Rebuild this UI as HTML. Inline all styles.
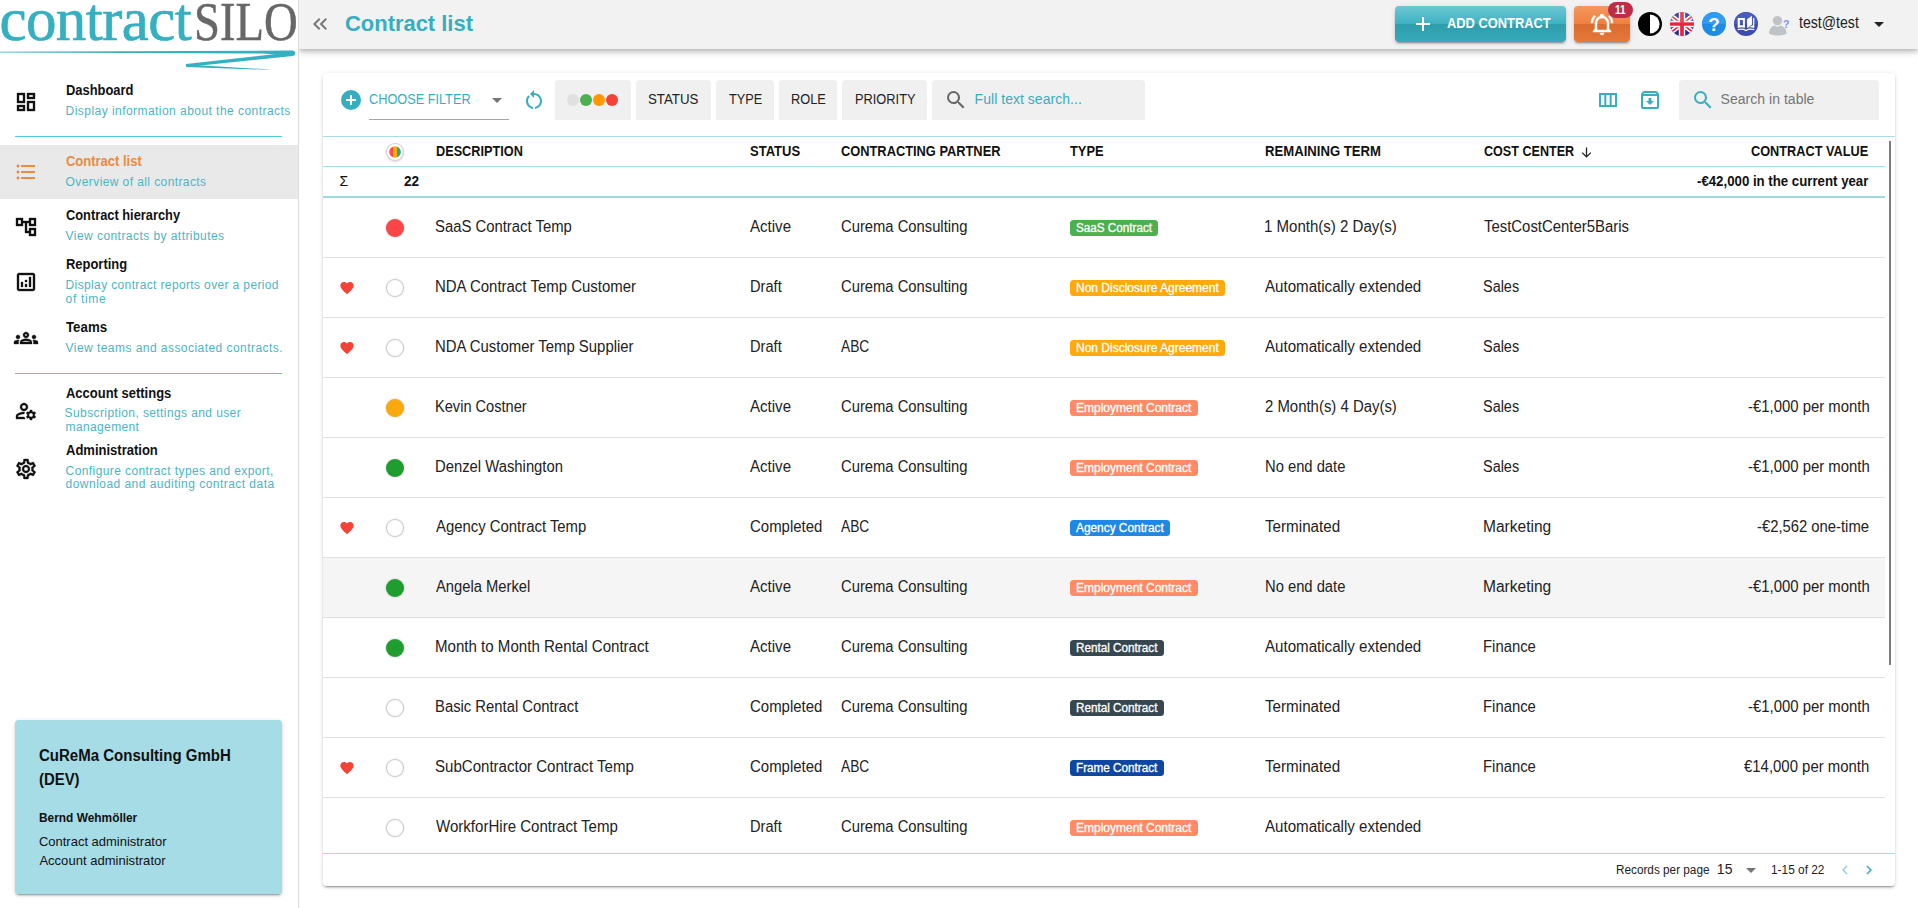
<!DOCTYPE html>
<html lang="en"><head><meta charset="utf-8"><title>Contract list</title>
<style>
html,body{margin:0;padding:0}
body{width:1918px;height:908px;overflow:hidden;position:relative;background:#fff;font-family:"Liberation Sans",sans-serif;color:#222}
.a{position:absolute;display:block}
.t{position:absolute;white-space:nowrap;display:block}
svg{overflow:visible}
</style></head><body>
<!-- ================= main background / card ================= -->
<div class="a" style="left:323px;top:73px;width:1572px;height:813px;background:#fff;border-radius:4px;box-shadow:0 3px 1px -2px rgba(0,0,0,.2),0 2px 2px 0 rgba(0,0,0,.14),0 1px 5px 0 rgba(0,0,0,.12)"></div>
<!-- ================= top bar ================= -->
<div class="a" style="left:299px;top:0;width:1619px;height:49px;background:#f2f2f2;box-shadow:0 2px 4px -1px rgba(0,0,0,.15),0 4px 5px 0 rgba(0,0,0,.12),0 1px 10px 0 rgba(0,0,0,.11)"></div>
<!-- ================= sidebar ================= -->
<div class="a" style="left:0;top:0;width:298px;height:908px;background:#fff;border-right:1px solid #dcdcdc"></div>
<!-- logo -->
<span class="t" style="left:-0.5px;top:-15px;font-family:'Liberation Serif',serif;font-size:61px;line-height:70px;color:#34b0c1;letter-spacing:-0.6px;-webkit-text-stroke:0.7px #34b0c1">contract</span>
<span class="t" style="left:194.3px;top:-11px;font-family:'Liberation Serif',serif;font-size:55px;line-height:66px;color:#676767;transform-origin:0 0;transform:scaleX(.849);-webkit-text-stroke:0.5px #676767">SILO</span>
<svg class="a" style="left:0;top:0" width="298" height="75" viewBox="0 0 298 75">
<path fill="#34b0c1" d="M0,51.700 L292,50.500 C296.500,50.500 296.500,56 292,56 L278,54.600 L262,53.500 L0,52.600 Z"/>
<path fill="#34b0c1" d="M293,55.900 L186,66.900 L186,64 L282,53.300 Z"/>
<path fill="#34b0c1" d="M186,64.6 L272.5,69.6 L262,69.6 L186,66.9 Z"/>
</svg>
<!-- active item bg -->
<div class="a" style="left:0;top:145px;width:298px;height:54px;background:#e9e9e9"></div>
<!-- dividers -->
<div class="a" style="left:15px;top:136px;width:267px;height:1px;background:#4fcbe0"></div>
<div class="a" style="left:15px;top:373px;width:267px;height:1px;background:#4fcbe0"></div>
<!-- sidebar icons -->
<svg class="a" style="left:14px;top:89.5px" width="24" height="24" viewBox="0 0 24 24"><path fill="#111" stroke="#111" stroke-width=".35" d="M19 5v2h-4V5h4M9 5v6H5V5h4m10 8v6h-4v-6h4M9 17v2H5v-2h4M21 3h-8v6h8V3zM11 3H3v10h8V3zm10 8h-8v10h8V11zm-10 4H3v6h8v-6z"/></svg>
<svg class="a" style="left:14px;top:160px" width="24" height="24" viewBox="0 0 24 24"><path fill="#ea8b3f" d="M4 10.5c-.83 0-1.500.67-1.500 1.500s.67 1.500 1.500 1.500 1.500-.67 1.500-1.500-.67-1.500-1.500-1.500zm0-6c-.83 0-1.500.67-1.500 1.500S3.170 7.500 4 7.500 5.500 6.830 5.500 6 4.830 4.500 4 4.500zm0 12c-.83 0-1.500.68-1.500 1.500s.68 1.500 1.500 1.500 1.500-.68 1.500-1.500-.67-1.500-1.500-1.500zM7 19h14v-2H7v2zm0-6h14v-2H7v2zm0-8v2h14V5H7z"/></svg>
<svg class="a" style="left:14px;top:214.5px" width="24" height="24" viewBox="0 0 24 24"><path fill="#111" stroke="#111" stroke-width=".35" d="M22,11V3h-7v3H9V3H2v8h7V8h2v10h4v3h7v-8h-7v3h-2V8h2v3H22z M7,9H4V5h3V9z M17,15h3v4h-3V15z M17,5h3v4h-3V5z"/></svg>
<svg class="a" style="left:14px;top:270px" width="24" height="24" viewBox="0 0 24 24"><path fill="#111" stroke="#111" stroke-width=".35" d="M19,3H5C3.900,3,3,3.900,3,5v14c0,1.100,0.900,2,2,2h14c1.100,0,2-0.900,2-2V5C21,3.900,20.100,3,19,3z M19,19H5V5h14V19z M7,12h2v5H7V12z M15,7h2v10h-2V7z M11,14h2v3h-2V14z M11,10h2v2h-2V10z"/></svg>
<svg class="a" style="left:14px;top:326px" width="24" height="24" viewBox="0 0 24 24"><path fill="#111" stroke="#111" stroke-width=".35" d="M4,13c1.100,0,2-0.900,2-2c0-1.100-0.900-2-2-2s-2,0.900-2,2C2,12.100,2.900,13,4,13z M5.130,14.100C4.760,14.040,4.390,14,4,14 c-0.990,0-1.930,0.210-2.780,0.580C0.480,14.900,0,15.620,0,16.430V18l4.500,0v-1.610C4.500,15.560,4.730,14.780,5.130,14.100z M20,13c1.100,0,2-0.900,2-2 c0-1.100-0.900-2-2-2s-2,0.900-2,2C18,12.100,18.900,13,20,13z M24,16.430c0-0.810-0.480-1.530-1.220-1.850C21.930,14.210,20.990,14,20,14 c-0.390,0-0.760,0.040-1.130,0.100c0.400,0.680,0.630,1.460,0.630,2.290V18l4.500,0V16.430z M16.240,13.650c-1.170-0.520-2.610-0.900-4.240-0.900 c-1.630,0-3.070,0.390-4.240,0.900C6.680,14.130,6,15.210,6,16.390V18h12v-1.610C18,15.210,17.320,14.130,16.240,13.650z M8.070,16 c0.090-0.230,0.130-0.390,0.910-0.690c0.970-0.380,1.990-0.560,3.020-0.560s2.050,0.180,3.020,0.560c0.770,0.300,0.810,0.460,0.910,0.690H8.070z M12,8 c0.550,0,1,0.450,1,1s-0.450,1-1,1s-1-0.450-1-1S11.450,8,12,8 M12,6c-1.660,0-3,1.340-3,3c0,1.660,1.340,3,3,3s3-1.340,3-3 C15,7.340,13.660,6,12,6L12,6z"/></svg>
<svg class="a" style="left:14px;top:398.5px" width="24" height="24" viewBox="0 0 24 24"><path fill="#111" stroke="#111" stroke-width=".35" d="M4 18v-.65c0-.34.16-.66.41-.81C6.100 15.530 8.030 15 10 15c.03 0 .05 0 .08.010.1-.7.300-1.370.59-1.980-.22-.02-.44-.03-.67-.03-2.420 0-4.680.67-6.610 1.820-.88.520-1.390 1.500-1.390 2.530V20h9.260c-.42-.6-.75-1.280-.97-2H4zM10 12c2.210 0 4-1.790 4-4s-1.790-4-4-4-4 1.790-4 4 1.790 4 4 4zm0-6c1.100 0 2 .9 2 2s-.9 2-2 2-2-.9-2-2 .9-2 2-2zM20.750 16c0-.22-.03-.42-.06-.63l1.140-1.010-1-1.730-1.450.49c-.32-.27-.68-.48-1.080-.63L18 11h-2l-.3 1.490c-.4.150-.76.360-1.080.63l-1.450-.49-1 1.730 1.140 1.010c-.03.210-.06.410-.06.630s.03.420.06.630l-1.140 1.010 1 1.730 1.450-.49c.32.270.68.480 1.080.63L16 21h2l.3-1.490c.4-.15.760-.36 1.080-.63l1.450.49 1-1.730-1.140-1.010c.03-.21.060-.41.060-.63zM17 18c-1.100 0-2-.9-2-2s.9-2 2-2 2 .9 2 2-.9 2-2 2z"/></svg>
<svg class="a" style="left:14px;top:456.500px" width="24" height="24" viewBox="0 0 24 24"><path fill="#111" stroke="#111" stroke-width=".35" d="M19.430 12.980c.04-.32.070-.64.070-.98 0-.34-.03-.66-.07-.98l2.110-1.650c.19-.15.240-.42.120-.64l-2-3.460c-.09-.16-.26-.25-.44-.25-.06 0-.12.010-.17.030l-2.490 1c-.52-.4-1.080-.73-1.690-.98l-.38-2.650C14.460 2.180 14.250 2 14 2h-4c-.25 0-.46.180-.49.420l-.38 2.650c-.61.250-1.170.59-1.690.98l-2.490-1c-.06-.02-.12-.03-.18-.03-.17 0-.34.090-.43.250l-2 3.460c-.13.220-.07.490.12.640l2.110 1.650c-.04.320-.07.650-.07.980 0 .33.030.66.070.98l-2.110 1.650c-.19.150-.24.420-.12.640l2 3.460c.09.160.26.250.44.250.06 0 .12-.01.170-.03l2.490-1c.52.400 1.080.73 1.690.98l.38 2.650c.03.240.24.420.49.420h4c.25 0 .46-.18.490-.42l.38-2.650c.61-.25 1.170-.59 1.690-.98l2.490 1c.06.020.12.030.18.030.17 0 .34-.09.430-.25l2-3.460c.12-.22.070-.49-.12-.64l-2.110-1.650zm-1.980-1.710c.04.310.05.520.05.730 0 .21-.02.430-.05.730l-.14 1.130.89.700 1.080.84-.7 1.210-1.270-.51-1.040-.42-.9.680c-.43.320-.84.560-1.250.73l-1.060.43-.16 1.130-.2 1.350h-1.400l-.19-1.350-.16-1.130-1.060-.43c-.43-.18-.83-.41-1.230-.71l-.91-.7-1.060.43-1.270.51-.7-1.210 1.080-.84.890-.7-.14-1.130c-.03-.31-.05-.54-.05-.74s.02-.43.050-.73l.14-1.130-.89-.7-1.080-.84.700-1.210 1.270.51 1.040.42.900-.68c.43-.32.840-.56 1.250-.73l1.060-.43.160-1.130.2-1.350h1.390l.19 1.350.16 1.130 1.060.43c.43.180.83.410 1.230.71l.91.700 1.060-.43 1.270-.51.700 1.210-1.070.85-.89.700.14 1.130zM12 8c-2.210 0-4 1.790-4 4s1.790 4 4 4 4-1.790 4-4-1.790-4-4-4zm0 6c-1.100 0-2-.9-2-2s.9-2 2-2 2 .9 2 2-.9 2-2 2z"/></svg>
<!-- info card -->
<div class="a" style="left:15px;top:720px;width:267px;height:174px;background:#a5dce6;border-radius:4px;box-shadow:0 3px 1px -2px rgba(0,0,0,.2),0 2px 2px 0 rgba(0,0,0,.14),0 1px 5px 0 rgba(0,0,0,.12)"></div>
<!-- ================= top bar content ================= -->
<svg class="a" style="left:308px;top:12px" width="24" height="24" viewBox="0 0 24 24"><path fill="#777" d="M17.590 18L19 16.590 14.420 12 19 7.410 17.590 6l-6 6z M11 18l1.410-1.410L7.830 12l4.580-4.590L11 6l-6 6z"/></svg>
<!-- add contract button -->
<div class="a" style="left:1395px;top:6px;width:171px;height:36px;border-radius:4px;background:linear-gradient(#6dc7d3 0%,#3db2c2 50%,#2e9dac 50%,#36abba 100%);box-shadow:0 3px 1px -2px rgba(0,0,0,.2),0 2px 2px 0 rgba(0,0,0,.14),0 1px 5px 0 rgba(0,0,0,.12)"></div>
<svg class="a" style="left:1411px;top:12px" width="24" height="24" viewBox="0 0 24 24"><path fill="#fff" d="M19,13H13V19H11V13H5V11H11V5H13V11H19V13Z"/></svg>
<!-- bell button -->
<div class="a" style="left:1574px;top:6px;width:56px;height:36px;border-radius:4px;background:linear-gradient(#f6975f 0%,#f0803f 50%,#d86b2d 50%,#e6783a 100%);box-shadow:0 3px 1px -2px rgba(0,0,0,.2),0 2px 2px 0 rgba(0,0,0,.14),0 1px 5px 0 rgba(0,0,0,.12)"></div>
<svg class="a" style="left:1590px;top:12px" width="24" height="24" viewBox="0 0 24 24"><path fill="#fff" stroke="#fff" stroke-width=".5" d="M10,21H14A2,2 0 0,1 12,23A2,2 0 0,1 10,21M21,19V20H3V19L5,17V11C5,7.900 7.030,5.170 10,4.290C10,4.190 10,4.100 10,4A2,2 0 0,1 12,2A2,2 0 0,1 14,4C14,4.100 14,4.190 14,4.290C16.970,5.170 19,7.900 19,11V17L21,19M17,11A5,5 0 0,0 12,6A5,5 0 0,0 7,11V18H17V11M19.750,3.190L18.330,4.610C20.040,6.300 21,8.600 21,11H23C23,8.070 21.840,5.250 19.750,3.190M1,11H3C3,8.600 3.960,6.300 5.670,4.610L4.250,3.190C2.160,5.250 1,8.070 1,11Z"/></svg>
<div class="a" style="left:1608px;top:2px;width:25px;height:16px;border-radius:8px;background:#b92f47"></div>
<!-- contrast icon -->
<svg class="a" style="left:1638px;top:12px" width="24" height="24" viewBox="0 0 24 24"><circle cx="12" cy="12" r="12" fill="#000"/><path fill="#fff" d="M12,2.400 A9.600,9.600 0 0 1 12,21.600 Z"/></svg>
<!-- UK flag -->
<svg class="a" style="left:1670px;top:12px" width="24" height="24" viewBox="0 0 24 24"><defs><clipPath id="fc"><circle cx="12" cy="12" r="12"/></clipPath></defs><g clip-path="url(#fc)"><rect width="24" height="24" fill="#1f2d8a"/><path d="M-4,0 L28,24 M28,0 L-4,24" stroke="#fff" stroke-width="4.600"/><path d="M-4,0 L28,24 M28,0 L-4,24" stroke="#e8243c" stroke-width="1.500"/><path d="M12,0V24M0,12H24" stroke="#fff" stroke-width="6.400"/><path d="M12,0V24M0,12H24" stroke="#e8243c" stroke-width="3.700"/><rect width="24" height="11" fill="#fff" opacity=".14"/></g></svg>
<!-- help -->
<svg class="a" style="left:1702px;top:12px" width="24" height="24" viewBox="0 0 24 24"><defs><clipPath id="hc"><circle cx="12" cy="12" r="12"/></clipPath></defs><g clip-path="url(#hc)"><rect width="24" height="24" fill="#1e8be4"/><rect width="24" height="12" fill="#2f9bf3"/></g><text x="12" y="18.900" text-anchor="middle" font-family="Liberation Sans" font-weight="700" font-size="19" fill="#fff">?</text></svg>
<!-- book -->
<svg class="a" style="left:1734px;top:12px" width="24" height="24" viewBox="0 0 24 24"><defs><clipPath id="bc"><circle cx="12" cy="12" r="12"/></clipPath></defs><g clip-path="url(#bc)"><rect width="24" height="24" fill="#3b4cb0"/><rect width="24" height="12" fill="#4a5bbd"/></g><path fill="#fff" transform="translate(12 11.300) scale(1.120) translate(-12 -11.300)" d="M4.600,6.600 H11 V15.400 C9.400,14.700 7,14.700 4.600,15.500 Z M6.500,8.400 V13.300 C7.500,13.100 8.500,13.100 9.300,13.300 V8.400 Z M13,7.600 L17.300,4.600 V12.600 L13,15.400 Z M18.300,6.600 H19.400 V15.500 C17,14.700 14.600,14.700 13,15.400 L18.300,13.100 Z M4.600,16.400 C7,15.600 9.800,15.700 12,17 C14.200,15.700 17,15.600 19.400,16.400 V17.600 C17,16.900 14.300,17 12,18.300 C9.700,17 7,16.900 4.600,17.600 Z"/></svg>
<!-- user -->
<svg class="a" style="left:1767px;top:12px" width="24" height="24" viewBox="0 0 24 24"><circle cx="10.500" cy="8.600" r="4.700" fill="#bfc3c5"/><path fill="#bfc3c5" d="M2,21.500 C2,16.500 5.500,14 7.800,13.600 C9.300,15.100 11.700,15.100 13.200,13.600 C15.600,14 19.600,16.500 19.600,21.500 C15,24.300 6.500,24.300 2,21.500 Z"/><text x="16" y="16" font-family="Liberation Sans" font-weight="700" font-size="10.500" fill="#7d90f2">?</text></svg>
<svg class="a" style="left:1874px;top:21.700px" width="10" height="5" viewBox="0 0 10 5"><path fill="#222" d="M0,0H10L5,5Z"/></svg>
<!-- ================= toolbar ================= -->
<svg class="a" style="left:339.400px;top:88px" width="24" height="24" viewBox="0 0 24 24"><circle cx="12" cy="12" r="10" fill="#35afc0"/><path fill="#fff" d="M17,13H13V17H11V13H7V11H11V7H13V11H17V13Z"/></svg>
<div class="a" style="left:369px;top:119px;width:140px;height:1px;background:#a6a6a6"></div>
<svg class="a" style="left:492.300px;top:97.900px" width="10" height="5" viewBox="0 0 10 5"><path fill="#757575" d="M0,0H10L5,5Z"/></svg>
<svg class="a" style="left:522px;top:87.800px" width="24" height="24" viewBox="0 0 24 24"><path fill="#35afc0" d="M12,5V2L8,6l4,4V7c3.310,0,6,2.690,6,6c0,2.970-2.170,5.430-5,5.910v2.020c3.950-0.490,7-3.850,7-7.930C20,8.580,16.420,5,12,5z M6,13c0-1.650,0.670-3.150,1.760-4.240L6.340,7.340C4.900,8.790,4,10.790,4,13c0,4.080,3.050,7.440,7,7.930v-2.020 C8.170,18.430,6,15.970,6,13z"/></svg>
<div class="a" style="left:555px;top:80px;width:76px;height:40px;border-radius:4px 4px 0 0;background:#f0f0f0"></div>
<div class="a" style="left:567px;top:94px;width:12px;height:12px;border-radius:50%;background:#e0e0e0"></div>
<div class="a" style="left:580px;top:94px;width:12px;height:12px;border-radius:50%;background:#4caf50"></div>
<div class="a" style="left:593px;top:94px;width:12px;height:12px;border-radius:50%;background:#ff9800"></div>
<div class="a" style="left:606px;top:94px;width:12px;height:12px;border-radius:50%;background:#f44336"></div>
<div class="a" style="left:636px;top:80px;width:75px;height:40px;border-radius:4px 4px 0 0;background:#f0f0f0"></div>
<div class="a" style="left:716px;top:80px;width:58px;height:40px;border-radius:4px 4px 0 0;background:#f0f0f0"></div>
<div class="a" style="left:779px;top:80px;width:58px;height:40px;border-radius:4px 4px 0 0;background:#f0f0f0"></div>
<div class="a" style="left:842px;top:80px;width:85px;height:40px;border-radius:4px 4px 0 0;background:#f0f0f0"></div>
<div class="a" style="left:932px;top:80px;width:213px;height:40px;border-radius:4px 4px 0 0;background:#f0f0f0"></div>
<svg class="a" style="left:944.300px;top:88px" width="24" height="24" viewBox="0 0 24 24"><path fill="#666" d="M9.500,3A6.500,6.500 0 0,1 16,9.500C16,11.110 15.410,12.590 14.440,13.730L14.710,14H15.500L20.500,19L19,20.500L14,15.500V14.710L13.730,14.440C12.590,15.410 11.110,16 9.500,16A6.500,6.500 0 0,1 3,9.500A6.500,6.500 0 0,1 9.500,3M9.500,5C7,5 5,7 5,9.500C5,12 7,14 9.500,14C12,14 14,12 14,9.500C14,7 12,5 9.500,5Z"/></svg>
<svg class="a" style="left:1596.200px;top:88px" width="24" height="24" viewBox="0 0 24 24"><path fill="#35afc0" d="M3 5v14h18V5H3zm5.330 12H5V7h3.330v10zm5.340 0h-3.330V7h3.330v10zM19 17h-3.330V7H19v10z"/></svg>
<svg class="a" style="left:1638.200px;top:88.200px" width="24" height="24" viewBox="0 0 24 24"><path fill="#35afc0" d="M20.540 5.230l-1.390-1.680C18.880 3.210 18.470 3 18 3H6c-.47 0-.88.210-1.160.55L3.460 5.230C3.170 5.570 3 6.020 3 6.500V19c0 1.100.9 2 2 2h14c1.100 0 2-.9 2-2V6.500c0-.48-.17-.93-.46-1.270zM6.240 5h11.520l.81.970H5.440l.8-.97zM5 19V8h14v11H5zm8.450-9h-2.900v3H8l4 4 4-4h-2.550z"/></svg>
<div class="a" style="left:1679px;top:80px;width:200px;height:40px;border-radius:4px 4px 0 0;background:#f0f0f0"></div>
<svg class="a" style="left:1691px;top:88px" width="24" height="24" viewBox="0 0 24 24"><path fill="#35afc0" d="M9.500,3A6.500,6.500 0 0,1 16,9.500C16,11.110 15.410,12.590 14.440,13.730L14.710,14H15.500L20.500,19L19,20.500L14,15.500V14.710L13.730,14.440C12.590,15.410 11.110,16 9.500,16A6.500,6.500 0 0,1 3,9.500A6.500,6.500 0 0,1 9.500,3M9.500,5C7,5 5,7 5,9.500C5,12 7,14 9.500,14C12,14 14,12 14,9.500C14,7 12,5 9.500,5Z"/></svg>
<!-- ================= table lines ================= -->
<div class="a" style="left:323px;top:136px;width:1572px;height:1px;background:#a9dde5"></div>
<div class="a" style="left:323px;top:166px;width:1562px;height:1px;background:#a9dde5"></div>
<div class="a" style="left:323px;top:196px;width:1562px;height:2px;background:#9fd9e1"></div>
<div class="a" style="left:323px;top:853px;width:1572px;height:1px;background:#a9dde5"></div>
<div class="a" style="left:1889px;top:141px;width:2.400px;height:524px;background:#7d7d7d"></div>
<!-- header traffic icon -->
<div class="a" style="left:386px;top:143px;width:18px;height:18px;border-radius:50%;background:#fff;box-shadow:inset 0 0 0 1px #cdcdcd,0 1px 2px rgba(0,0,0,.15)"></div>
<svg class="a" style="left:389px;top:146px" width="12" height="12" viewBox="0 0 12 12"><defs><clipPath id="tc"><circle cx="6" cy="6" r="5.800"/></clipPath></defs><g clip-path="url(#tc)"><rect x="0" width="4" height="12" fill="#ff4d4d"/><rect x="4" width="4" height="12" fill="#ffab00"/><rect x="8" width="4" height="12" fill="#26a98a"/></g></svg>
<!-- sort arrow -->
<svg class="a" style="left:1580.500px;top:146.500px" width="11" height="11" viewBox="0 0 11 11"><path fill="none" stroke="#222" stroke-width="1.300" d="M5.500,0.500V9.700M1.200,5.600L5.500,9.900L9.800,5.600"/></svg>
<!-- footer icons -->
<svg class="a" style="left:1746px;top:867.900px" width="10" height="5" viewBox="0 0 10 5"><path fill="#757575" d="M0,0H10L5,5Z"/></svg>
<svg class="a" style="left:1836.400px;top:860.700px" width="18" height="18" viewBox="0 0 24 24"><path fill="#8fd0da" d="M15.410,16.580L10.830,12L15.410,7.410L14,6L8,12L14,18L15.410,16.580Z"/></svg>
<svg class="a" style="left:1860px;top:860.700px" width="18" height="18" viewBox="0 0 24 24"><path fill="#35afc0" d="M8.590,16.580L13.170,12L8.590,7.410L10,6L16,12L10,18L8.590,16.580Z"/></svg>
<div class="a" style="left:386px;top:219.0px;width:18px;height:18px;border-radius:50%;background:#fa4549;box-shadow:0 0 2px rgba(0,0,0,.3)"></div>
<div class="a" style="left:1070px;top:220.0px;width:88px;height:16px;border-radius:3.5px;background:#4caf50"></div>
<div class="a" style="left:323px;top:257px;width:1562px;height:1px;background:#e0e0e0"></div>
<svg class="a" style="left:339px;top:280.3px" width="16" height="16" viewBox="0 0 24 24"><path fill="#f44336" d="M12,21.35L10.55,20.03C5.4,15.36 2,12.27 2,8.5C2,5.41 4.42,3 7.5,3C9.24,3 10.91,3.81 12,5.08C13.09,3.81 14.76,3 16.5,3C19.58,3 22,5.41 22,8.5C22,12.27 18.6,15.36 13.45,20.03L12,21.35Z"/></svg>
<div class="a" style="left:386px;top:279.0px;width:18px;height:18px;border-radius:50%;background:#fff;box-shadow:inset 0 0 0 1px #c6c6c6,0 0 2px rgba(0,0,0,.18)"></div>
<div class="a" style="left:1070px;top:280.0px;width:155px;height:16px;border-radius:3.5px;background:#ffa90a"></div>
<div class="a" style="left:323px;top:317px;width:1562px;height:1px;background:#e0e0e0"></div>
<svg class="a" style="left:339px;top:340.3px" width="16" height="16" viewBox="0 0 24 24"><path fill="#f44336" d="M12,21.35L10.55,20.03C5.4,15.36 2,12.27 2,8.5C2,5.41 4.42,3 7.5,3C9.24,3 10.91,3.81 12,5.08C13.09,3.81 14.76,3 16.5,3C19.58,3 22,5.41 22,8.5C22,12.27 18.6,15.36 13.45,20.03L12,21.35Z"/></svg>
<div class="a" style="left:386px;top:339.0px;width:18px;height:18px;border-radius:50%;background:#fff;box-shadow:inset 0 0 0 1px #c6c6c6,0 0 2px rgba(0,0,0,.18)"></div>
<div class="a" style="left:1070px;top:340.0px;width:155px;height:16px;border-radius:3.5px;background:#ffa90a"></div>
<div class="a" style="left:323px;top:377px;width:1562px;height:1px;background:#e0e0e0"></div>
<div class="a" style="left:386px;top:399.0px;width:18px;height:18px;border-radius:50%;background:#f9a90c;box-shadow:0 0 2px rgba(0,0,0,.3)"></div>
<div class="a" style="left:1070px;top:400.0px;width:128px;height:16px;border-radius:3.5px;background:#ff8a65"></div>
<div class="a" style="left:323px;top:437px;width:1562px;height:1px;background:#e0e0e0"></div>
<div class="a" style="left:386px;top:459.0px;width:18px;height:18px;border-radius:50%;background:#1f9d2e;box-shadow:0 0 2px rgba(0,0,0,.3)"></div>
<div class="a" style="left:1070px;top:460.0px;width:128px;height:16px;border-radius:3.5px;background:#ff8a65"></div>
<div class="a" style="left:323px;top:497px;width:1562px;height:1px;background:#e0e0e0"></div>
<svg class="a" style="left:339px;top:520.3px" width="16" height="16" viewBox="0 0 24 24"><path fill="#f44336" d="M12,21.35L10.55,20.03C5.4,15.36 2,12.27 2,8.5C2,5.41 4.42,3 7.5,3C9.24,3 10.91,3.81 12,5.08C13.09,3.81 14.76,3 16.5,3C19.58,3 22,5.41 22,8.5C22,12.27 18.6,15.36 13.45,20.03L12,21.35Z"/></svg>
<div class="a" style="left:386px;top:519.0px;width:18px;height:18px;border-radius:50%;background:#fff;box-shadow:inset 0 0 0 1px #c6c6c6,0 0 2px rgba(0,0,0,.18)"></div>
<div class="a" style="left:1070px;top:520.0px;width:100px;height:16px;border-radius:3.5px;background:#1e88e5"></div>
<div class="a" style="left:323px;top:558px;width:1562px;height:59px;background:#f5f5f5"></div>
<div class="a" style="left:323px;top:557px;width:1562px;height:1px;background:#e0e0e0"></div>
<div class="a" style="left:386px;top:579.0px;width:18px;height:18px;border-radius:50%;background:#1f9d2e;box-shadow:0 0 2px rgba(0,0,0,.3)"></div>
<div class="a" style="left:1070px;top:580.0px;width:128px;height:16px;border-radius:3.5px;background:#ff8a65"></div>
<div class="a" style="left:323px;top:617px;width:1562px;height:1px;background:#e0e0e0"></div>
<div class="a" style="left:386px;top:639.0px;width:18px;height:18px;border-radius:50%;background:#1f9d2e;box-shadow:0 0 2px rgba(0,0,0,.3)"></div>
<div class="a" style="left:1070px;top:640.0px;width:94px;height:16px;border-radius:3.5px;background:#37474f"></div>
<div class="a" style="left:323px;top:677px;width:1562px;height:1px;background:#e0e0e0"></div>
<div class="a" style="left:386px;top:699.0px;width:18px;height:18px;border-radius:50%;background:#fff;box-shadow:inset 0 0 0 1px #c6c6c6,0 0 2px rgba(0,0,0,.18)"></div>
<div class="a" style="left:1070px;top:700.0px;width:94px;height:16px;border-radius:3.5px;background:#37474f"></div>
<div class="a" style="left:323px;top:737px;width:1562px;height:1px;background:#e0e0e0"></div>
<svg class="a" style="left:339px;top:760.3px" width="16" height="16" viewBox="0 0 24 24"><path fill="#f44336" d="M12,21.35L10.55,20.03C5.4,15.36 2,12.27 2,8.5C2,5.41 4.42,3 7.5,3C9.24,3 10.91,3.81 12,5.08C13.09,3.81 14.76,3 16.5,3C19.58,3 22,5.41 22,8.5C22,12.27 18.6,15.36 13.45,20.03L12,21.35Z"/></svg>
<div class="a" style="left:386px;top:759.0px;width:18px;height:18px;border-radius:50%;background:#fff;box-shadow:inset 0 0 0 1px #c6c6c6,0 0 2px rgba(0,0,0,.18)"></div>
<div class="a" style="left:1070px;top:760.0px;width:94px;height:16px;border-radius:3.5px;background:#0d47a1"></div>
<div class="a" style="left:323px;top:797px;width:1562px;height:1px;background:#e0e0e0"></div>
<div class="a" style="left:386px;top:819.0px;width:18px;height:18px;border-radius:50%;background:#fff;box-shadow:inset 0 0 0 1px #c6c6c6,0 0 2px rgba(0,0,0,.18)"></div>
<div class="a" style="left:1070px;top:820.0px;width:128px;height:16px;border-radius:3.5px;background:#ff8a65"></div>
<span class="t" style="left:65.57px;top:81px;font-size:14px;line-height:18px;color:#111;font-weight:700;transform-origin:0 0;transform:scaleX(0.9219);">Dashboard</span>
<span class="t" style="left:65.60px;top:104px;font-size:12px;line-height:15px;color:#4cb5c5;letter-spacing:0.453px;">Display information about the contracts</span>
<span class="t" style="left:65.58px;top:152px;font-size:14px;line-height:18px;color:#ea8b3f;font-weight:700;transform-origin:0 0;transform:scaleX(0.9268);">Contract list</span>
<span class="t" style="left:65.60px;top:175px;font-size:12px;line-height:15px;color:#4cb5c5;letter-spacing:0.408px;">Overview of all contracts</span>
<span class="t" style="left:65.57px;top:206px;font-size:14px;line-height:18px;color:#111;font-weight:700;transform-origin:0 0;transform:scaleX(0.9160);">Contract hierarchy</span>
<span class="t" style="left:65.60px;top:229px;font-size:12px;line-height:15px;color:#4cb5c5;letter-spacing:0.444px;">View contracts by attributes</span>
<span class="t" style="left:65.57px;top:255px;font-size:14px;line-height:18px;color:#111;font-weight:700;transform-origin:0 0;transform:scaleX(0.9242);">Reporting</span>
<span class="t" style="left:65.60px;top:278px;font-size:12px;line-height:15px;color:#4cb5c5;letter-spacing:0.365px;">Display contract reports over a period</span>
<span class="t" style="left:65.60px;top:292px;font-size:12px;line-height:15px;color:#4cb5c5;letter-spacing:0.667px;">of time</span>
<span class="t" style="left:65.58px;top:318px;font-size:14px;line-height:18px;color:#111;font-weight:700;transform-origin:0 0;transform:scaleX(0.9477);">Teams</span>
<span class="t" style="left:65.60px;top:341px;font-size:12px;line-height:15px;color:#4cb5c5;letter-spacing:0.449px;">View teams and associated contracts.</span>
<span class="t" style="left:65.58px;top:384px;font-size:14px;line-height:18px;color:#111;font-weight:700;transform-origin:0 0;transform:scaleX(0.9272);">Account settings</span>
<span class="t" style="left:64.60px;top:406px;font-size:12px;line-height:15px;color:#4cb5c5;letter-spacing:0.400px;">Subscription, settings and user</span>
<span class="t" style="left:65.60px;top:420px;font-size:12px;line-height:15px;color:#4cb5c5;letter-spacing:0.367px;">management</span>
<span class="t" style="left:65.58px;top:441px;font-size:14px;line-height:18px;color:#111;font-weight:700;transform-origin:0 0;transform:scaleX(0.9293);">Administration</span>
<span class="t" style="left:65.60px;top:464px;font-size:12px;line-height:15px;color:#4cb5c5;letter-spacing:0.409px;">Configure contract types and export,</span>
<span class="t" style="left:65.60px;top:477px;font-size:12px;line-height:15px;color:#4cb5c5;letter-spacing:0.462px;">download and auditing contract data</span>
<span class="t" style="left:39.38px;top:746px;font-size:16px;line-height:20px;color:#111;font-weight:700;transform-origin:0 0;transform:scaleX(0.9382);">CuReMa Consulting GmbH</span>
<span class="t" style="left:39.37px;top:770px;font-size:16px;line-height:20px;color:#111;font-weight:700;transform-origin:0 0;transform:scaleX(0.9318);">(DEV)</span>
<span class="t" style="left:39.37px;top:810px;font-size:13px;line-height:16px;color:#111;font-weight:700;transform-origin:0 0;transform:scaleX(0.9148);">Bernd Wehmöller</span>
<span class="t" style="left:39.39px;top:834px;font-size:13px;line-height:16px;color:#111;transform-origin:0 0;transform:scaleX(0.9969);">Contract administrator</span>
<span class="t" style="left:39.39px;top:853px;font-size:13px;line-height:16px;color:#111;letter-spacing:0.025px;">Account administrator</span>
<span class="t" style="left:344.79px;top:10px;font-size:22px;line-height:28px;color:#35afc0;font-weight:700;transform-origin:0 0;transform:scaleX(0.9969);">Contract list</span>
<span class="t" style="left:1446.84px;top:14px;font-size:14px;line-height:18px;color:#fff;font-weight:700;transform-origin:0 0;transform:scaleX(0.9196);">ADD CONTRACT</span>
<span class="t" style="left:1615.00px;top:3px;font-size:12px;line-height:15px;color:#fff;font-weight:700;transform-origin:0 0;transform:scaleX(0.8462);">11</span>
<span class="t" style="left:1799.00px;top:13px;font-size:16px;line-height:20px;color:#222;transform-origin:0 0;transform:scaleX(0.8824);">test@test</span>
<span class="t" style="left:369.37px;top:90px;font-size:14px;line-height:18px;color:#35afc0;transform-origin:0 0;transform:scaleX(0.9089);">CHOOSE FILTER</span>
<span class="t" style="left:647.82px;top:90px;font-size:14px;line-height:18px;color:#222;transform-origin:0 0;transform:scaleX(0.9491);">STATUS</span>
<span class="t" style="left:728.75px;top:90px;font-size:14px;line-height:18px;color:#222;transform-origin:0 0;transform:scaleX(0.9081);">TYPE</span>
<span class="t" style="left:790.66px;top:90px;font-size:14px;line-height:18px;color:#222;transform-origin:0 0;transform:scaleX(0.9162);">ROLE</span>
<span class="t" style="left:854.80px;top:90px;font-size:14px;line-height:18px;color:#222;transform-origin:0 0;transform:scaleX(0.9152);">PRIORITY</span>
<span class="t" style="left:974.60px;top:90px;font-size:14px;line-height:18px;color:#35afc0;letter-spacing:0.033px;">Full text search...</span>
<span class="t" style="left:1720.60px;top:90px;font-size:14px;line-height:18px;color:#757575;letter-spacing:0.029px;">Search in table</span>
<span class="t" style="left:436.19px;top:142px;font-size:14px;line-height:18px;color:#111;font-weight:700;transform-origin:0 0;transform:scaleX(0.9073);">DESCRIPTION</span>
<span class="t" style="left:749.61px;top:142px;font-size:14px;line-height:18px;color:#111;font-weight:700;transform-origin:0 0;transform:scaleX(0.9296);">STATUS</span>
<span class="t" style="left:841.37px;top:142px;font-size:14px;line-height:18px;color:#111;font-weight:700;transform-origin:0 0;transform:scaleX(0.9167);">CONTRACTING PARTNER</span>
<span class="t" style="left:1070.00px;top:142px;font-size:14px;line-height:18px;color:#111;font-weight:700;transform-origin:0 0;transform:scaleX(0.9189);">TYPE</span>
<span class="t" style="left:1265.41px;top:142px;font-size:14px;line-height:18px;color:#111;font-weight:700;transform-origin:0 0;transform:scaleX(0.9374);">REMAINING TERM</span>
<span class="t" style="left:1483.57px;top:142px;font-size:14px;line-height:18px;color:#111;font-weight:700;transform-origin:0 0;transform:scaleX(0.8980);">COST CENTER</span>
<span class="t" style="left:1751.42px;top:142px;font-size:14px;line-height:18px;color:#111;font-weight:700;transform-origin:0 0;transform:scaleX(0.9093);">CONTRACT VALUE</span>
<span class="t" style="left:339.39px;top:172px;font-size:14px;line-height:18px;color:#111;letter-spacing:-0.200px;">Σ</span>
<span class="t" style="left:403.79px;top:172px;font-size:14px;line-height:18px;color:#111;font-weight:700;transform-origin:0 0;transform:scaleX(0.9688);">22</span>
<span class="t" style="left:1697.00px;top:172px;font-size:14px;line-height:18px;color:#111;font-weight:700;transform-origin:0 0;transform:scaleX(0.9451);">-€42,000 in the current year</span>
<span class="t" style="left:435.07px;top:217px;font-size:16px;line-height:20px;color:#222;transform-origin:0 0;transform:scaleX(0.9288);">SaaS Contract Temp</span>
<span class="t" style="left:749.61px;top:217px;font-size:16px;line-height:20px;color:#222;transform-origin:0 0;transform:scaleX(0.9419);">Active</span>
<span class="t" style="left:841.37px;top:217px;font-size:16px;line-height:20px;color:#222;transform-origin:0 0;transform:scaleX(0.9234);">Curema Consulting</span>
<span class="t" style="left:1076.00px;top:221px;font-size:12px;line-height:15px;color:#fff;transform-origin:0 0;transform:scaleX(0.9744);-webkit-text-stroke:0.3px #fff;">SaaS Contract</span>
<span class="t" style="left:1264.47px;top:217px;font-size:16px;line-height:20px;color:#222;transform-origin:0 0;transform:scaleX(0.9393);">1 Month(s) 2 Day(s)</span>
<span class="t" style="left:1483.58px;top:217px;font-size:16px;line-height:20px;color:#222;transform-origin:0 0;transform:scaleX(0.9321);">TestCostCenter5Baris</span>
<span class="t" style="left:435.06px;top:277px;font-size:16px;line-height:20px;color:#222;transform-origin:0 0;transform:scaleX(0.9355);">NDA Contract Temp Customer</span>
<span class="t" style="left:749.61px;top:277px;font-size:16px;line-height:20px;color:#222;transform-origin:0 0;transform:scaleX(0.9143);">Draft</span>
<span class="t" style="left:841.37px;top:277px;font-size:16px;line-height:20px;color:#222;transform-origin:0 0;transform:scaleX(0.9234);">Curema Consulting</span>
<span class="t" style="left:1076.00px;top:281px;font-size:12px;line-height:15px;color:#fff;-webkit-text-stroke:0.3px #fff;">Non Disclosure Agreement</span>
<span class="t" style="left:1265.40px;top:277px;font-size:16px;line-height:20px;color:#222;transform-origin:0 0;transform:scaleX(0.9442);">Automatically extended</span>
<span class="t" style="left:1482.67px;top:277px;font-size:16px;line-height:20px;color:#222;transform-origin:0 0;transform:scaleX(0.9026);">Sales</span>
<span class="t" style="left:435.07px;top:337px;font-size:16px;line-height:20px;color:#222;transform-origin:0 0;transform:scaleX(0.9316);">NDA Customer Temp Supplier</span>
<span class="t" style="left:749.61px;top:337px;font-size:16px;line-height:20px;color:#222;transform-origin:0 0;transform:scaleX(0.9143);">Draft</span>
<span class="t" style="left:841.36px;top:337px;font-size:16px;line-height:20px;color:#222;transform-origin:0 0;transform:scaleX(0.8606);">ABC</span>
<span class="t" style="left:1076.00px;top:341px;font-size:12px;line-height:15px;color:#fff;-webkit-text-stroke:0.3px #fff;">Non Disclosure Agreement</span>
<span class="t" style="left:1265.40px;top:337px;font-size:16px;line-height:20px;color:#222;transform-origin:0 0;transform:scaleX(0.9442);">Automatically extended</span>
<span class="t" style="left:1482.67px;top:337px;font-size:16px;line-height:20px;color:#222;transform-origin:0 0;transform:scaleX(0.9026);">Sales</span>
<span class="t" style="left:435.09px;top:397px;font-size:16px;line-height:20px;color:#222;transform-origin:0 0;transform:scaleX(0.9120);">Kevin Costner</span>
<span class="t" style="left:749.61px;top:397px;font-size:16px;line-height:20px;color:#222;transform-origin:0 0;transform:scaleX(0.9419);">Active</span>
<span class="t" style="left:841.37px;top:397px;font-size:16px;line-height:20px;color:#222;transform-origin:0 0;transform:scaleX(0.9234);">Curema Consulting</span>
<span class="t" style="left:1076.00px;top:401px;font-size:12px;line-height:15px;color:#fff;-webkit-text-stroke:0.3px #fff;">Employment Contract</span>
<span class="t" style="left:1265.41px;top:397px;font-size:16px;line-height:20px;color:#222;transform-origin:0 0;transform:scaleX(0.9326);">2 Month(s) 4 Day(s)</span>
<span class="t" style="left:1482.67px;top:397px;font-size:16px;line-height:20px;color:#222;transform-origin:0 0;transform:scaleX(0.9026);">Sales</span>
<span class="t" style="left:1748.00px;top:397px;font-size:16px;line-height:20px;color:#222;transform-origin:0 0;transform:scaleX(0.9308);">-€1,000 per month</span>
<span class="t" style="left:435.07px;top:457px;font-size:16px;line-height:20px;color:#222;transform-origin:0 0;transform:scaleX(0.9263);">Denzel Washington</span>
<span class="t" style="left:749.61px;top:457px;font-size:16px;line-height:20px;color:#222;transform-origin:0 0;transform:scaleX(0.9419);">Active</span>
<span class="t" style="left:841.37px;top:457px;font-size:16px;line-height:20px;color:#222;transform-origin:0 0;transform:scaleX(0.9234);">Curema Consulting</span>
<span class="t" style="left:1076.00px;top:461px;font-size:12px;line-height:15px;color:#fff;-webkit-text-stroke:0.3px #fff;">Employment Contract</span>
<span class="t" style="left:1265.41px;top:457px;font-size:16px;line-height:20px;color:#222;transform-origin:0 0;transform:scaleX(0.9218);">No end date</span>
<span class="t" style="left:1482.67px;top:457px;font-size:16px;line-height:20px;color:#222;transform-origin:0 0;transform:scaleX(0.9026);">Sales</span>
<span class="t" style="left:1748.00px;top:457px;font-size:16px;line-height:20px;color:#222;transform-origin:0 0;transform:scaleX(0.9308);">-€1,000 per month</span>
<span class="t" style="left:436.00px;top:517px;font-size:16px;line-height:20px;color:#222;transform-origin:0 0;transform:scaleX(0.9302);">Agency Contract Temp</span>
<span class="t" style="left:749.61px;top:517px;font-size:16px;line-height:20px;color:#222;transform-origin:0 0;transform:scaleX(0.9351);">Completed</span>
<span class="t" style="left:841.36px;top:517px;font-size:16px;line-height:20px;color:#222;transform-origin:0 0;transform:scaleX(0.8606);">ABC</span>
<span class="t" style="left:1076.00px;top:521px;font-size:12px;line-height:15px;color:#fff;transform-origin:0 0;transform:scaleX(0.9888);-webkit-text-stroke:0.3px #fff;">Agency Contract</span>
<span class="t" style="left:1265.40px;top:517px;font-size:16px;line-height:20px;color:#222;transform-origin:0 0;transform:scaleX(0.9494);">Terminated</span>
<span class="t" style="left:1482.62px;top:517px;font-size:16px;line-height:20px;color:#222;transform-origin:0 0;transform:scaleX(0.9710);">Marketing</span>
<span class="t" style="left:1757.00px;top:517px;font-size:16px;line-height:20px;color:#222;transform-origin:0 0;transform:scaleX(0.9256);">-€2,562 one-time</span>
<span class="t" style="left:436.00px;top:577px;font-size:16px;line-height:20px;color:#222;transform-origin:0 0;transform:scaleX(0.9216);">Angela Merkel</span>
<span class="t" style="left:749.61px;top:577px;font-size:16px;line-height:20px;color:#222;transform-origin:0 0;transform:scaleX(0.9419);">Active</span>
<span class="t" style="left:841.37px;top:577px;font-size:16px;line-height:20px;color:#222;transform-origin:0 0;transform:scaleX(0.9234);">Curema Consulting</span>
<span class="t" style="left:1076.00px;top:581px;font-size:12px;line-height:15px;color:#fff;-webkit-text-stroke:0.3px #fff;">Employment Contract</span>
<span class="t" style="left:1265.41px;top:577px;font-size:16px;line-height:20px;color:#222;transform-origin:0 0;transform:scaleX(0.9218);">No end date</span>
<span class="t" style="left:1482.62px;top:577px;font-size:16px;line-height:20px;color:#222;transform-origin:0 0;transform:scaleX(0.9710);">Marketing</span>
<span class="t" style="left:1748.00px;top:577px;font-size:16px;line-height:20px;color:#222;transform-origin:0 0;transform:scaleX(0.9308);">-€1,000 per month</span>
<span class="t" style="left:435.06px;top:637px;font-size:16px;line-height:20px;color:#222;transform-origin:0 0;transform:scaleX(0.9425);">Month to Month Rental Contract</span>
<span class="t" style="left:749.61px;top:637px;font-size:16px;line-height:20px;color:#222;transform-origin:0 0;transform:scaleX(0.9419);">Active</span>
<span class="t" style="left:841.37px;top:637px;font-size:16px;line-height:20px;color:#222;transform-origin:0 0;transform:scaleX(0.9234);">Curema Consulting</span>
<span class="t" style="left:1076.00px;top:641px;font-size:12px;line-height:15px;color:#fff;transform-origin:0 0;transform:scaleX(0.9762);-webkit-text-stroke:0.3px #fff;">Rental Contract</span>
<span class="t" style="left:1265.40px;top:637px;font-size:16px;line-height:20px;color:#222;transform-origin:0 0;transform:scaleX(0.9442);">Automatically extended</span>
<span class="t" style="left:1482.65px;top:637px;font-size:16px;line-height:20px;color:#222;transform-origin:0 0;transform:scaleX(0.9286);">Finance</span>
<span class="t" style="left:435.07px;top:697px;font-size:16px;line-height:20px;color:#222;transform-origin:0 0;transform:scaleX(0.9266);">Basic Rental Contract</span>
<span class="t" style="left:749.61px;top:697px;font-size:16px;line-height:20px;color:#222;transform-origin:0 0;transform:scaleX(0.9351);">Completed</span>
<span class="t" style="left:841.37px;top:697px;font-size:16px;line-height:20px;color:#222;transform-origin:0 0;transform:scaleX(0.9234);">Curema Consulting</span>
<span class="t" style="left:1076.00px;top:701px;font-size:12px;line-height:15px;color:#fff;transform-origin:0 0;transform:scaleX(0.9762);-webkit-text-stroke:0.3px #fff;">Rental Contract</span>
<span class="t" style="left:1265.40px;top:697px;font-size:16px;line-height:20px;color:#222;transform-origin:0 0;transform:scaleX(0.9494);">Terminated</span>
<span class="t" style="left:1482.65px;top:697px;font-size:16px;line-height:20px;color:#222;transform-origin:0 0;transform:scaleX(0.9286);">Finance</span>
<span class="t" style="left:1748.00px;top:697px;font-size:16px;line-height:20px;color:#222;transform-origin:0 0;transform:scaleX(0.9308);">-€1,000 per month</span>
<span class="t" style="left:435.06px;top:757px;font-size:16px;line-height:20px;color:#222;transform-origin:0 0;transform:scaleX(0.9405);">SubContractor Contract Temp</span>
<span class="t" style="left:749.61px;top:757px;font-size:16px;line-height:20px;color:#222;transform-origin:0 0;transform:scaleX(0.9351);">Completed</span>
<span class="t" style="left:841.36px;top:757px;font-size:16px;line-height:20px;color:#222;transform-origin:0 0;transform:scaleX(0.8606);">ABC</span>
<span class="t" style="left:1076.00px;top:761px;font-size:12px;line-height:15px;color:#fff;transform-origin:0 0;transform:scaleX(0.9762);-webkit-text-stroke:0.3px #fff;">Frame Contract</span>
<span class="t" style="left:1265.40px;top:757px;font-size:16px;line-height:20px;color:#222;transform-origin:0 0;transform:scaleX(0.9494);">Terminated</span>
<span class="t" style="left:1482.65px;top:757px;font-size:16px;line-height:20px;color:#222;transform-origin:0 0;transform:scaleX(0.9286);">Finance</span>
<span class="t" style="left:1744.00px;top:757px;font-size:16px;line-height:20px;color:#222;transform-origin:0 0;transform:scaleX(0.9328);">€14,000 per month</span>
<span class="t" style="left:436.00px;top:817px;font-size:16px;line-height:20px;color:#222;transform-origin:0 0;transform:scaleX(0.9409);">WorkforHire Contract Temp</span>
<span class="t" style="left:749.61px;top:817px;font-size:16px;line-height:20px;color:#222;transform-origin:0 0;transform:scaleX(0.9143);">Draft</span>
<span class="t" style="left:841.37px;top:817px;font-size:16px;line-height:20px;color:#222;transform-origin:0 0;transform:scaleX(0.9234);">Curema Consulting</span>
<span class="t" style="left:1076.00px;top:821px;font-size:12px;line-height:15px;color:#fff;-webkit-text-stroke:0.3px #fff;">Employment Contract</span>
<span class="t" style="left:1265.40px;top:817px;font-size:16px;line-height:20px;color:#222;transform-origin:0 0;transform:scaleX(0.9442);">Automatically extended</span>
<span class="t" style="left:1616.00px;top:863px;font-size:12px;line-height:15px;color:#222;transform-origin:0 0;transform:scaleX(0.9800);">Records per page</span>
<span class="t" style="left:1716.79px;top:860px;font-size:14px;line-height:18px;color:#222;letter-spacing:0.300px;">15</span>
<span class="t" style="left:1771.20px;top:863px;font-size:12px;line-height:15px;color:#222;transform-origin:0 0;transform:scaleX(0.9889);">1-15 of 22</span>
</body></html>
